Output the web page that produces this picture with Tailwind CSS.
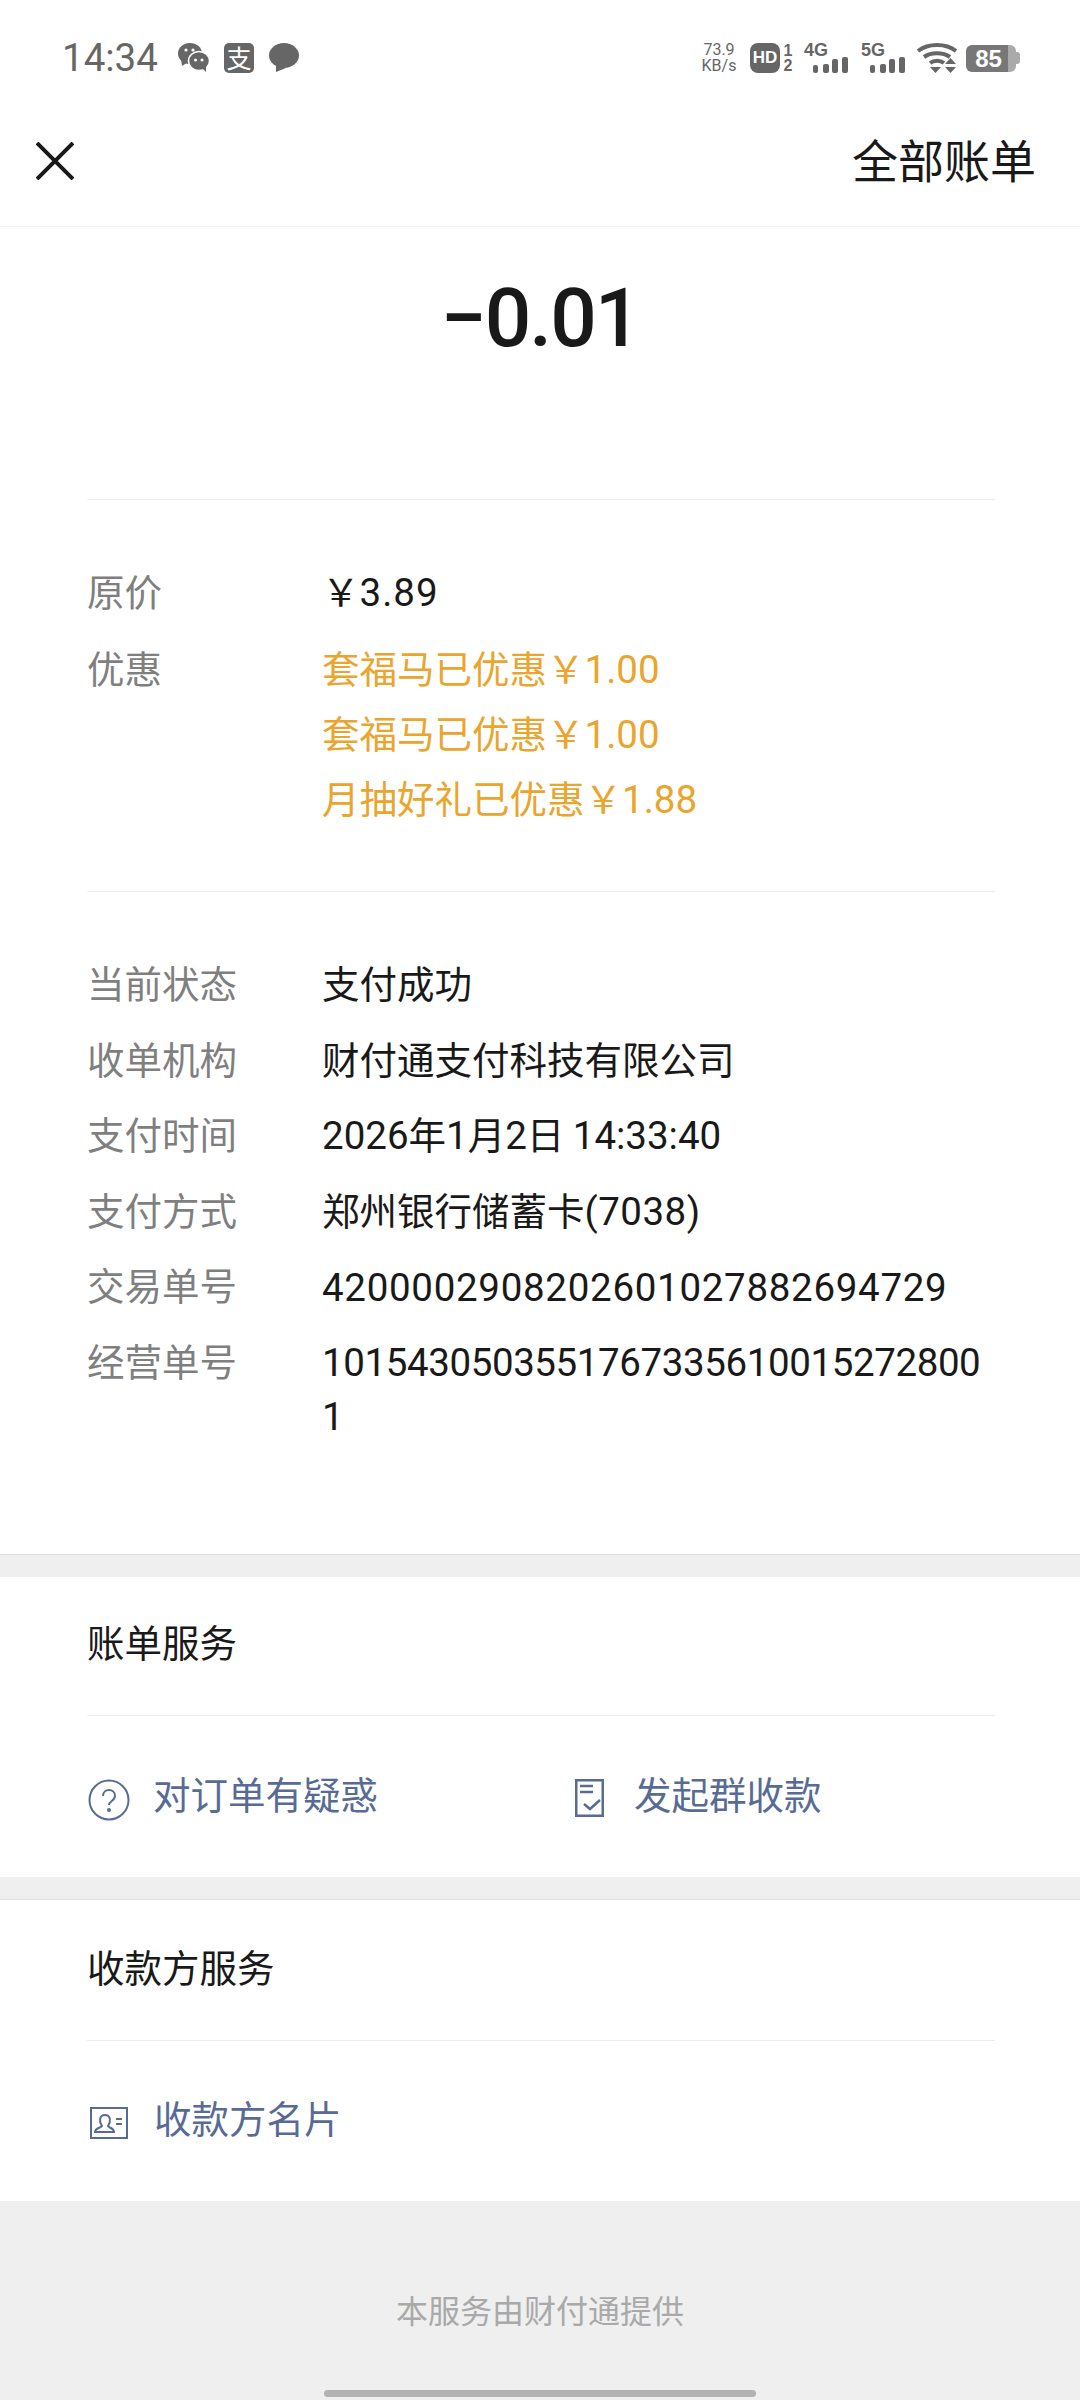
<!DOCTYPE html>
<html lang="zh-CN">
<head>
    <meta charset="UTF-8">
    <meta name="viewport" content="width=device-width, initial-scale=1.0">
    <script src="https://cdn.jsdelivr.net/npm/@tailwindcss/browser@4"></script>
    <title>账单详情</title>
</head>
<body class="bg-white w-[1080px] h-[2400px] overflow-hidden font-['Noto_Sans_CJK_SC','Noto_Sans',sans-serif] text-[37.5px] text-[#191919]">
    <!-- 状态栏 -->
    <div class="h-[116px] flex items-start justify-between pl-[62px] pr-[60px] pt-[43px]">
        <div class="flex items-center h-[30px]">
            <span class="font-['Roboto',sans-serif] text-[38.5px] text-[#666] leading-none w-[95px]">14:34</span>
            <!-- 微信 -->
            <svg class="ml-[21px] w-[32px] h-[30px]" viewBox="0 0 32 30">
                <ellipse cx="12" cy="10.500" rx="12" ry="10.500" fill="#666"/>
                <path d="M3 16l1 7 6-4z" fill="#666"/>
                <circle cx="8" cy="7" r="1.600" fill="#fff"/><circle cx="15" cy="7" r="1.600" fill="#fff"/>
                <ellipse cx="21" cy="18" rx="10.500" ry="9.500" fill="#666" stroke="#fff" stroke-width="1.500"/>
                <path d="M24 25l4 4 0-6z" fill="#666"/>
                <circle cx="17.500" cy="17" r="1.500" fill="#fff"/><circle cx="24" cy="17" r="1.500" fill="#fff"/>
            </svg>
            <!-- 支付宝 -->
            <span class="ml-[14px] w-[30px] h-[30px] rounded-[5px] bg-[#666] text-white text-[25px] leading-[29px] text-center">支</span>
            <!-- 消息 -->
            <svg class="ml-[15px] w-[30px] h-[30px]" viewBox="0 0 30 30">
                <ellipse cx="15" cy="12.500" rx="15" ry="12.500" fill="#666"/>
                <path d="M7 21l0 8 10-4z" fill="#666"/>
            </svg>
        </div>
        <div class="flex items-center h-[30px] text-[#666]">
            <div class="w-[38px] flex flex-col items-center font-['Roboto',sans-serif] text-[16px] leading-[16px]">
                <span>73.9</span><span>KB/s</span>
            </div>
            <!-- HD -->
            <div class="ml-[12px] w-[30px] h-[30px] rounded-[8px] bg-[#666] text-white font-['Liberation_Sans',sans-serif] font-bold text-[17px] leading-[30px] text-center">HD</div>
            <div class="w-[12px] ml-[2px] flex flex-col items-center font-['Liberation_Sans',sans-serif] font-bold text-[16px] leading-[15px]">
                <span>1</span><span>2</span>
            </div>
            <!-- 4G -->
            <div class="ml-[10px] w-[44px] h-[30px] relative">
                <span class="absolute left-0 top-[-2px] font-['Liberation_Sans',sans-serif] font-bold text-[18px] leading-[18px]">4G</span>
                <svg class="absolute left-0 top-0" width="44" height="30" viewBox="0 0 44 30" fill="#666">
                    <rect x="9" y="22" width="5" height="8" rx="2"/><rect x="19" y="21" width="6" height="9" rx="2"/><rect x="28" y="16" width="6" height="14" rx="2"/><rect x="38" y="14" width="6" height="16" rx="2"/>
                </svg>
            </div>
            <!-- 5G -->
            <div class="ml-[13px] w-[44px] h-[30px] relative">
                <span class="absolute left-0 top-[-2px] font-['Liberation_Sans',sans-serif] font-bold text-[18px] leading-[18px]">5G</span>
                <svg class="absolute left-0 top-0" width="44" height="30" viewBox="0 0 44 30" fill="#666">
                    <rect x="9" y="22" width="5" height="8" rx="2"/><rect x="19" y="21" width="6" height="9" rx="2"/><rect x="28" y="16" width="6" height="14" rx="2"/><rect x="38" y="14" width="6" height="16" rx="2"/>
                </svg>
            </div>
            <!-- WiFi -->
            <svg class="ml-[12px] w-[40px] h-[30px]" viewBox="0 0 40 30" fill="none" stroke="#666" stroke-width="4">
                <path d="M1 8c10-8 28-8 38 0"/>
                <path d="M7 14c7-5 19-5 26 0"/>
                <path d="M13 20c4-3 10-3 14 0"/>
                <path d="M13 24h11l-5.500 6z" fill="#666" stroke="none"/>
                <path d="M28 21l5.500-6 5.500 6zM28 24h11l-5.500 6z" fill="#666" stroke="none"/>
            </svg>
            <!-- 电量 -->
            <div class="ml-[9px] flex items-center">
                <div class="w-[50px] h-[27px] rounded-[6px] bg-[linear-gradient(90deg,#777_84%,#aaa_84%)] text-white font-['Liberation_Sans',sans-serif] font-bold text-[24px] leading-[27px] pr-[5px] text-center">85</div>
                <div class="w-[4px] h-[12px] rounded-r-[3px] bg-[#aaa]"></div>
            </div>
        </div>
    </div>

    <!-- 导航 -->
    <div class="h-[111px] flex items-center justify-between pl-[36px] pr-[44px] pb-[20px] border-b border-[#f4f4f4]">
        <svg class="w-[38px] h-[38px]" viewBox="0 0 38 38" stroke="#191919" stroke-width="4" fill="none">
            <path d="M1 1l36 36M37 1L1 37"/>
        </svg>
        <span class="text-[46px] leading-none mb-[6px]">全部账单</span>
    </div>

    <!-- 金额 -->
    <div class="h-[273px] ml-[87px] mr-[85px] pt-[49px] pr-[2px] border-b border-[#ececec] text-center">
        <span class="font-['Roboto',sans-serif] font-medium text-[82px] tracking-[-2px] leading-[84px] block">−0.01</span>
    </div>

    <!-- 价格 -->
    <div class="ml-[87px] mr-[85px] pt-[52px] pb-[62px] border-b border-[#ececec]">
        <div class="flex h-[75px] leading-[75px]">
            <span class="w-[235px] text-[#7f7f7f]">原价</span>
            <span>￥<span class="font-['Roboto',sans-serif] text-[38.5px] tracking-[1px]">3.89</span></span>
        </div>
        <div class="flex leading-[65px] mt-[7px]">
            <span class="w-[235px] text-[#7f7f7f]">优惠</span>
            <div class="text-[#e9a52e]">
                <div class="h-[65px]">套福马已优惠￥<span class="font-['Roboto',sans-serif] text-[38.5px]">1.00</span></div>
                <div class="h-[65px]">套福马已优惠￥<span class="font-['Roboto',sans-serif] text-[38.5px]">1.00</span></div>
                <div class="h-[65px]">月抽好礼已优惠￥<span class="font-['Roboto',sans-serif] text-[38.5px]">1.88</span></div>
            </div>
        </div>
    </div>

    <!-- 订单信息 -->
    <div class="mx-[87px] pt-[52px] h-[662px]">
        <div class="flex h-[75.5px] leading-[75.5px]"><span class="w-[235px] shrink-0 text-[#7f7f7f]">当前状态</span><span>支付成功</span></div>
        <div class="flex h-[75.5px] leading-[75.5px]"><span class="w-[235px] shrink-0 text-[#7f7f7f]">收单机构</span><span>财付通支付科技有限公司</span></div>
        <div class="flex h-[75.5px] leading-[75.5px]"><span class="w-[235px] shrink-0 text-[#7f7f7f]">支付时间</span><span><span class="font-['Roboto',sans-serif] text-[38.5px]">2026</span>年<span class="font-['Roboto',sans-serif] text-[38.5px]">1</span>月<span class="font-['Roboto',sans-serif] text-[38.5px]">2</span>日 <span class="font-['Roboto',sans-serif] text-[38.5px]">14:33:40</span></span></div>
        <div class="flex h-[75.5px] leading-[75.5px]"><span class="w-[235px] shrink-0 text-[#7f7f7f]">支付方式</span><span>郑州银行储蓄卡<span class="font-['Roboto',sans-serif] text-[38.5px] tracking-[0.5px]">(7038)</span></span></div>
        <div class="flex h-[75.5px] leading-[75.5px]"><span class="w-[235px] shrink-0 text-[#7f7f7f]">交易单号</span><span class="pt-[4px] font-['Roboto',sans-serif] text-[38.5px] tracking-[0.7px]">4200002908202601027882694729</span></div>
        <div class="flex h-[75.5px] leading-[75.5px]"><span class="w-[235px] shrink-0 text-[#7f7f7f]">经营单号</span><span class="whitespace-nowrap leading-[54px] pt-[14px] font-['Roboto',sans-serif] text-[38.5px] tracking-[-0.4px]">1015430503551767335610015272800<br>1</span></div>
    </div>

    <div class="h-[23px] bg-[#efefef] border-t border-[#e0e0e0]"></div>

    <!-- 账单服务 -->
    <div class="ml-[87px] mr-[85px] h-[139px] flex items-center pb-[9px] border-b border-[#ececec]">账单服务</div>
    <div class="mx-[87px] h-[161px] flex items-start pt-[51px] text-[#576b95]">
        <div class="w-[484px] flex items-start">
            <svg class="w-[42px] h-[42px] ml-[1px] mt-[12px]" viewBox="0 0 42 42" fill="none" stroke="#576b95" stroke-width="2">
                <circle cx="21" cy="21" r="19.500"/>
                <path d="M15 17c0-8 12-8 12 0 0 5-6 5-6 9"/>
                <circle cx="21" cy="31" r="1" fill="#576b95"/>
            </svg>
            <span class="ml-[23px] leading-[52px]">对订单有疑惑</span>
        </div>
        <div class="flex items-start">
            <svg class="w-[29px] h-[38px] ml-[4px] mt-[12px]" viewBox="0 0 29 38" fill="none" stroke="#576b95" stroke-width="2.500">
                <path d="M1.250 1.250h26.500v35.500h-26.500z"/>
                <path d="M5 7h13M5 13h13M9 25l6 5 10-9"/>
            </svg>
            <span class="ml-[30px] leading-[52px]">发起群收款</span>
        </div>
    </div>

    <div class="h-[23px] bg-[#efefef] border-b border-[#e0e0e0]"></div>

    <!-- 收款方服务 -->
    <div class="ml-[87px] mr-[85px] h-[141px] flex items-center pb-[7px] border-b border-[#ececec]">收款方服务</div>
    <div class="mx-[87px] h-[160px] flex items-start pt-[50px] text-[#576b95]">
        <svg class="w-[38px] h-[32px] ml-[3px] mt-[16px]" viewBox="0 0 38 32" fill="none" stroke="#576b95" stroke-width="2">
            <path d="M1 1h36v30H1z"/>
            <path d="M5 25c0-4 6-4 7-6-3-4-3-11 3-11s6 7 3 11c1 2 6 2 6 6z"/>
            <path d="M26 12h6M26 17h6"/>
        </svg>
        <span class="ml-[26px] leading-[52px]">收款方名片</span>
    </div>

    <!-- 页脚 -->
    <div class="h-[199px] bg-[#efefef] relative text-center text-[32px] text-[#a9a9a9] pt-[85px] leading-[46px]">
        本服务由财付通提供
        <div class="absolute left-[324px] top-[189px] w-[432px] h-[7px] rounded-full bg-[#b2b2b2]"></div>
    </div>
</body>
</html>
